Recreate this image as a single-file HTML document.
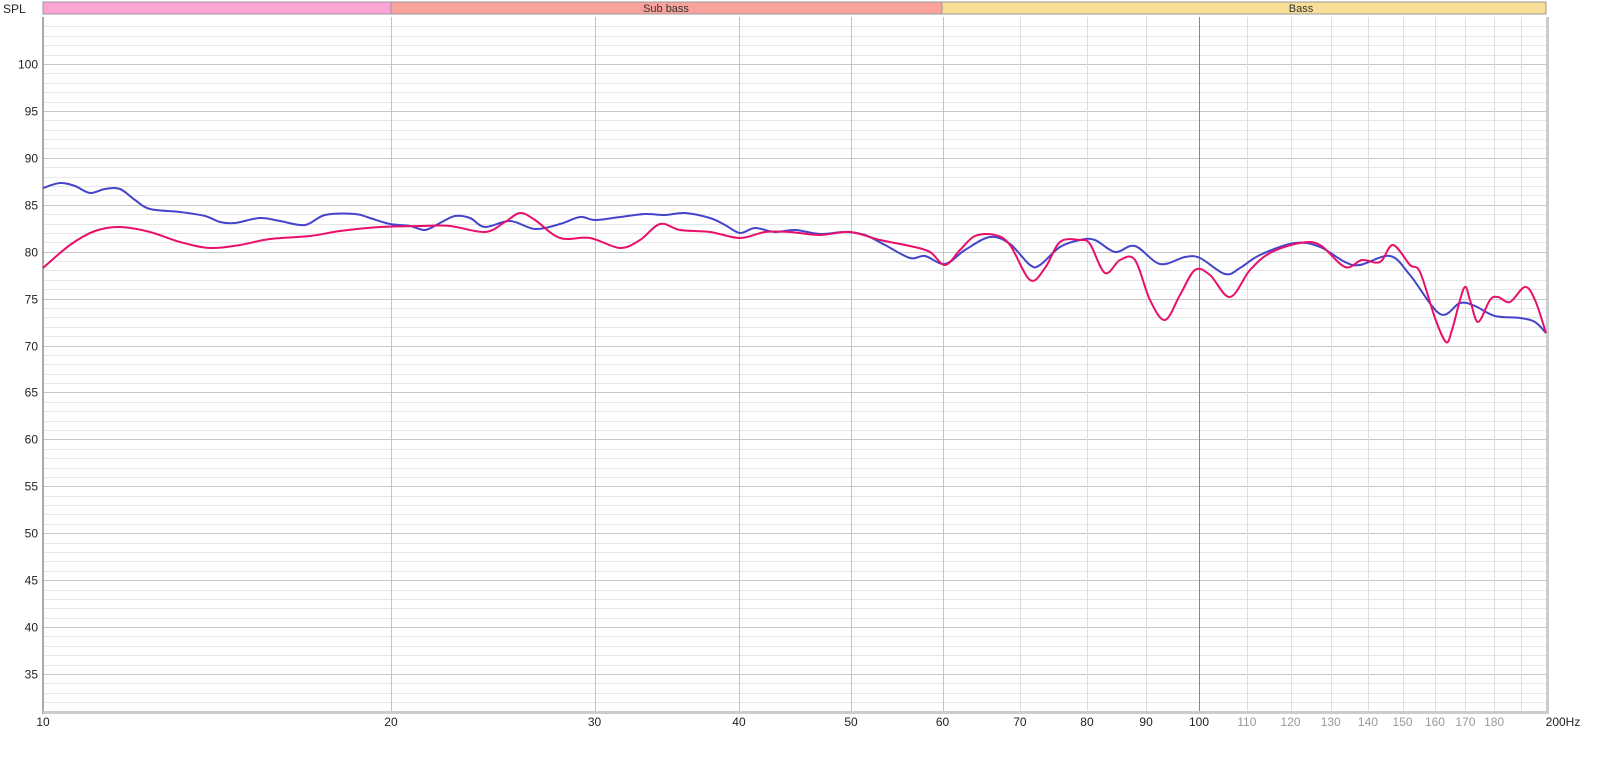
<!DOCTYPE html>
<html><head><meta charset="utf-8"><style>
body{margin:0;background:#fff;width:1608px;height:752px;overflow:hidden;font-family:"Liberation Sans",sans-serif}
</style></head><body>
<svg id="s" width="1608" height="752" xmlns="http://www.w3.org/2000/svg" font-family="Liberation Sans, sans-serif" font-size="12">
<rect x="43" y="2" width="348" height="12" fill="#f9a4d3" stroke="#999" stroke-width="1"/>
<rect x="391" y="2" width="551" height="12" fill="#f9a29d" stroke="#999" stroke-width="1"/>
<rect x="942" y="2" width="604" height="12" fill="#f8df98" stroke="#999" stroke-width="1"/>
<text x="3" y="13" fill="#222">SPL</text>
<text x="666" y="12" fill="#333" text-anchor="middle" font-size="11">Sub bass</text>
<text x="1301" y="12" fill="#333" text-anchor="middle" font-size="11">Bass</text>
<rect x="42" y="17" width="3" height="697" fill="#aaa"/>
<rect x="43" y="711" width="1506" height="3" fill="#ccc"/>
<rect x="1546" y="17" width="3" height="697" fill="#ccc"/>
<rect x="44" y="17" width="1502" height="694" fill="#fff"/>
<g id="g"></g>
<path id="b" fill="none" stroke="#4444cc" stroke-width="2" stroke-linejoin="round"/>
<path id="r" fill="none" stroke="#e8106a" stroke-width="2" stroke-linejoin="round"/>
<g id="l"></g>
</svg>
<script>
var NS="http://www.w3.org/2000/svg",g=document.getElementById("g"),l=document.getElementById("l");
function el(p,t,a,txt){var e=document.createElementNS(NS,t);for(var k in a)e.setAttribute(k,a[k]);if(txt)e.textContent=txt;p.appendChild(e);}
for(var d=104;d>=31;d--){var y=Math.round(64+(100-d)*9.385)+0.5;if(y<18||y>711)continue;
el(g,"line",{x1:44,x2:1546,y1:y,y2:y,stroke:d%5?"#e6e6e6":"#c8c8c8"});
if(d%5==0&&d>=35&&d<=100)el(l,"text",{x:38,y:y+4,"text-anchor":"end",fill:"#222"},""+d);}
function X(f){return 43+1156*Math.log10(f/10);}
var fs=[20,30,40,50,60,70,80,90,100,110,120,130,140,150,160,170,180,190];
fs.forEach(function(f){var x=Math.round(X(f))+0.5;var c=(f==100)?"#888":(f<=60)?"#c4c4c4":"#dedede";
el(g,"line",{x1:x,x2:x,y1:17,y2:711,stroke:c});});
[10,20,30,40,50,60,70,80,90,100].forEach(function(f){el(l,"text",{x:X(f),y:726,"text-anchor":"middle",fill:"#222"},""+f);});
[110,120,130,140,150,160,170,180].forEach(function(f){el(l,"text",{x:X(f),y:726,"text-anchor":"middle",fill:"#999"},""+f);});
el(l,"text",{x:1563,y:726,"text-anchor":"middle",fill:"#222"},"200Hz");
function smooth(s){var p=s.trim().split(/\s+/).map(function(q){return q.split(",").map(Number)});
var d="M"+p[0][0]+","+p[0][1];
for(var i=0;i<p.length-1;i++){var p0=p[i-1]||p[i],p1=p[i],p2=p[i+1],p3=p[i+2]||p2;
var c1x=p1[0]+(p2[0]-p0[0])/6,c1y=p1[1]+(p2[1]-p0[1])/6,c2x=p2[0]-(p3[0]-p1[0])/6,c2y=p2[1]-(p3[1]-p1[1])/6;
d+=" C"+c1x.toFixed(1)+","+c1y.toFixed(1)+" "+c2x.toFixed(1)+","+c2y.toFixed(1)+" "+p2[0]+","+p2[1];}
return d;}
document.getElementById("b").setAttribute("d",smooth("43,188 60,183 75,186 90,193 105,189 120,189 135,200 150,209 180,212 205,216 220,222 235,223 260,218 280,221 305,225 325,215 355,214 370,218 390,224 410,226 425,230 440,223 455,216 470,218 485,227 510,221 535,229 560,224 580,217 595,220 620,217 645,214 665,215 685,213 710,218 725,225 740,233 755,228 775,232 795,230 820,234 845,232 865,235 885,245 910,258 925,256 945,264 965,250 990,237 1010,244 1030,265 1040,265 1060,247 1080,240 1095,240 1115,252 1135,246 1160,264 1185,257 1200,258 1225,274 1240,268 1260,255 1295,243 1320,247 1345,262 1360,265 1390,256 1410,275 1440,314 1460,303 1475,306 1495,316 1520,318 1535,322 1546,333"));
document.getElementById("r").setAttribute("d",smooth("43,268 70,245 95,231 120,227 150,232 180,242 210,248 240,245 270,239 310,236 340,231 380,227 420,226 450,226 485,232 505,222 520,213 535,220 560,238 590,238 620,248 640,240 660,224 680,230 710,232 740,238 765,232 790,232 820,235 850,232 880,240 910,246 930,252 945,265 960,250 975,236 995,235 1010,245 1030,280 1045,268 1060,242 1080,240 1090,244 1105,273 1120,260 1135,260 1150,300 1165,320 1180,295 1195,270 1210,275 1230,297 1250,270 1270,253 1300,243 1320,245 1345,267 1362,260 1380,262 1393,245 1410,265 1420,272 1435,318 1446,342 1452,330 1464,288 1470,300 1478,322 1490,300 1498,297 1510,302 1525,287 1535,300 1546,333"));
</script>
</body></html>
